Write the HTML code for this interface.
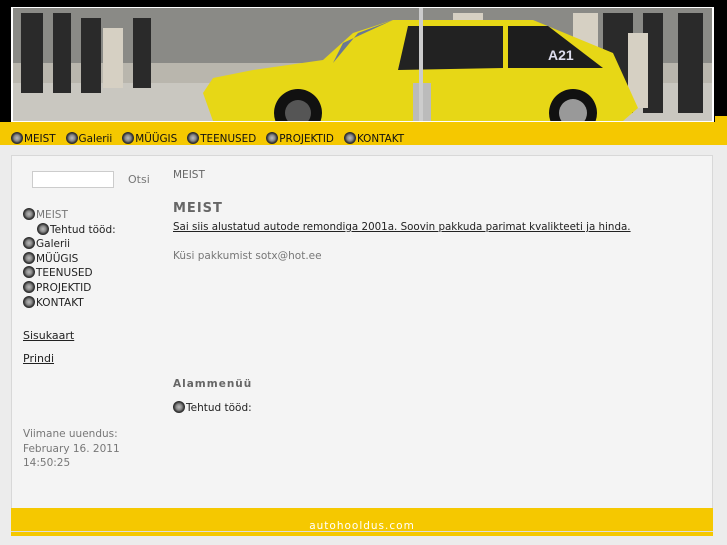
<!DOCTYPE html>
<html><head><meta charset="utf-8"><style>
*{margin:0;padding:0;box-sizing:border-box}
body{width:727px;height:545px;background:#ececec;font-family:"DejaVu Sans",sans-serif;font-size:11px;color:#222;position:relative;overflow:hidden}
.abs{position:absolute}
.ic{display:inline-block;width:12px;height:12px;border-radius:50%;background:radial-gradient(circle at 50% 50%,#bbb 0,#888 35%,#333 60%,#111 100%);vertical-align:-2px;margin-right:1px}
.nav span{margin-right:10px;color:#111}
.side div{height:14.6px;white-space:nowrap}
.u{color:#222;text-decoration:underline}
</style></head><body>
<div class="abs" style="left:0;top:0;width:727px;height:122px;background:#000"></div>
<div class="abs" style="left:11px;top:7px;width:703px;height:115px;background:#fff"></div>
<svg class="abs" style="left:13px;top:8px" width="699" height="113" viewBox="0 0 699 113">
<rect width="699" height="113" fill="#b9b6ad"/>
<rect y="0" width="699" height="55" fill="#8a8a86"/>
<rect y="75" width="699" height="38" fill="#c9c7c0"/>
<g fill="#2a2a2a"><rect x="8" y="5" width="22" height="80"/><rect x="40" y="5" width="18" height="80"/><rect x="68" y="10" width="20" height="75"/><rect x="120" y="10" width="18" height="70"/><rect x="590" y="5" width="30" height="100"/><rect x="630" y="5" width="20" height="100"/><rect x="665" y="5" width="25" height="100"/></g>
<g fill="#d6d0c3"><rect x="90" y="20" width="20" height="60"/><rect x="440" y="5" width="30" height="40"/><rect x="560" y="5" width="25" height="90"/><rect x="615" y="25" width="20" height="75"/></g>
<path d="M190 85 L200 70 L240 62 L310 52 L340 25 L380 12 L520 12 L600 45 L625 100 L610 113 L200 113Z" fill="#e7d716"/>
<path d="M320 55 L345 25 L380 12 L330 35Z" fill="#6b7893"/>
<path d="M395 18 L490 18 L490 60 L385 62Z" fill="#222"/>
<path d="M495 18 L535 18 L590 60 L495 60Z" fill="#1d1d1d"/>
<text x="535" y="52" fill="#dde" font-family="Liberation Sans" font-weight="bold" font-size="14">A21</text>
<circle cx="285" cy="105" r="24" fill="#111"/><circle cx="285" cy="105" r="13" fill="#555"/>
<circle cx="560" cy="105" r="24" fill="#111"/><circle cx="560" cy="105" r="14" fill="#999"/>
<rect x="400" y="75" width="18" height="38" fill="#bbb"/><rect x="406" y="0" width="4" height="113" fill="#ccc"/>
</svg>
<div class="abs" style="left:0;top:122px;width:727px;height:23px;background:#f5c800"></div>
<div class="abs" style="left:715px;top:116px;width:12px;height:8px;background:#f5c800"></div>
<div class="abs nav" style="left:11px;top:132px;white-space:nowrap;font-size:10.4px"><span><i class="ic"></i>MEIST</span><span><i class="ic"></i>Galerii</span><span><i class="ic"></i>MÜÜGIS</span><span><i class="ic"></i>TEENUSED</span><span><i class="ic"></i>PROJEKTID</span><span><i class="ic"></i>KONTAKT</span></div>
<div class="abs" style="left:11px;top:155px;width:702px;height:353px;background:#f4f4f4;border:1px solid #d8d8d8;border-bottom:none"></div>
<div class="abs" style="left:32px;top:171px;width:82px;height:17px;background:#fff;border:1px solid #ccc"></div>
<div class="abs" style="left:128px;top:173px;color:#777">Otsi</div>
<div class="abs side" style="left:23px;top:208px;font-size:10.5px">
<div style="color:#777"><i class="ic"></i>MEIST</div>
<div style="padding-left:14px"><i class="ic"></i>Tehtud tööd:</div>
<div><i class="ic"></i>Galerii</div><div><i class="ic"></i>MÜÜGIS</div><div><i class="ic"></i>TEENUSED</div><div><i class="ic"></i>PROJEKTID</div><div><i class="ic"></i>KONTAKT</div></div>
<div class="abs u" style="left:23px;top:329px">Sisukaart</div>
<div class="abs u" style="left:23px;top:352px">Prindi</div>
<div class="abs" style="left:23px;top:427px;color:#777;line-height:14.5px;font-size:10.5px">Viimane uuendus:<br>February 16. 2011<br>14:50:25</div>
<div class="abs" style="left:173px;top:169px;color:#666;font-size:10.5px">MEIST</div>
<div class="abs" style="left:173px;top:201px;color:#666;font-size:13px;font-weight:bold;letter-spacing:1px">MEIST</div>
<div class="abs u" style="left:173px;top:221px;font-size:10.3px;white-space:nowrap">Sai siis alustatud autode remondiga 2001a. Soovin pakkuda parimat kvalikteeti ja hinda.</div>
<div class="abs" style="left:173px;top:250px;color:#777;font-size:10.5px">Küsi pakkumist sotx@hot.ee</div>
<div class="abs" style="left:173px;top:378px;color:#666;font-weight:bold;letter-spacing:1px;font-size:10.5px">Alammenüü</div>
<div class="abs" style="left:173px;top:401px;font-size:10.5px"><i class="ic"></i>Tehtud tööd:</div>
<div class="abs" style="left:11px;top:508px;width:702px;height:23px;background:#f5c800;color:#fff;text-align:center;padding-top:12px;font-size:10.5px;letter-spacing:1px">autohooldus.com</div>
<div class="abs" style="left:11px;top:531px;width:702px;height:1px;background:#ddd"></div>
<div class="abs" style="left:11px;top:532px;width:702px;height:4px;background:#f5c800"></div>
</body></html>
